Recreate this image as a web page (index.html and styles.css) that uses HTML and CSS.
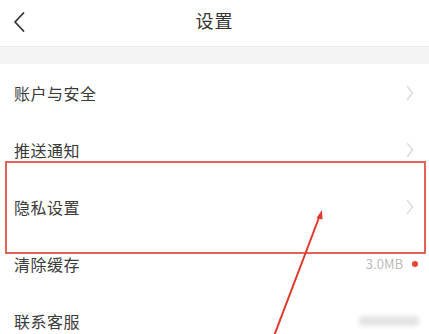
FILE: index.html
```html
<!DOCTYPE html>
<html lang="zh">
<head>
<meta charset="utf-8">
<link rel="stylesheet" href="styles.css">
</head>
<body>
<div class="page">
  <header class="topbar">
    <svg class="back" width="14" height="22" viewBox="0 0 14 22"><path d="M11.5 2 L3 11 L11.5 20" fill="none" stroke="#333" stroke-width="1.8" stroke-linecap="round" stroke-linejoin="round"/></svg>
    <div class="title">设置</div>
  </header>
  <div class="gap"></div>
  <ul class="list">
    <li class="row"><span class="label">账户与安全</span><svg class="chev" width="8" height="16" viewBox="0 0 8 16"><path d="M1.5 1.5 L6.5 8 L1.5 14.5" fill="none" stroke="#ddd" stroke-width="1.5" stroke-linecap="round" stroke-linejoin="round"/></svg></li>
    <li class="row"><span class="label">推送通知</span><svg class="chev" width="8" height="16" viewBox="0 0 8 16"><path d="M1.5 1.5 L6.5 8 L1.5 14.5" fill="none" stroke="#ddd" stroke-width="1.5" stroke-linecap="round" stroke-linejoin="round"/></svg></li>
    <li class="row"><span class="label">隐私设置</span><svg class="chev" width="8" height="16" viewBox="0 0 8 16"><path d="M1.5 1.5 L6.5 8 L1.5 14.5" fill="none" stroke="#ddd" stroke-width="1.5" stroke-linecap="round" stroke-linejoin="round"/></svg></li>
    <li class="row"><span class="label">清除缓存</span><span class="meta">3.0MB<i class="dot"></i></span></li>
    <li class="row"><span class="label">联系客服</span><span class="mark"></span></li>
  </ul>
  <div class="highlight"></div>
  <svg class="pointer" width="429" height="334" viewBox="0 0 429 334">
    <line x1="274" y1="336" x2="320" y2="215" stroke="#e0392b" stroke-width="2"/>
    <path d="M322 210 L316.5 218 L322.5 219.5 Z" fill="#e0392b"/>
  </svg>
</div>
</body>
</html>
```
FILE: styles.css
```css
* { box-sizing: border-box; }
html, body { margin: 0; padding: 0; }
body {
  background: #fff;
  font-family: "Noto Sans CJK SC", "Noto Sans", sans-serif;
  color: #333;
  width: 429px;
  height: 334px;
  overflow: hidden;
}
.page { position: relative; width: 429px; height: 334px; overflow: hidden; }
.topbar {
  height: 47px;
  display: flex;
  align-items: center;
  justify-content: center;
  position: relative;
  border-bottom: 1px solid #eee;
}
.back { position: absolute; left: 12px; top: 11px; }
.title { font-size: 18px; color: #333; letter-spacing: 1px; margin-top: -6px; }
.gap { height: 17px; background: #f4f4f4; }
.list { list-style: none; margin: 0; padding: 0; }
.row {
  height: 57px;
  display: flex;
  align-items: center;
  justify-content: space-between;
  padding: 0 14px 0 14px;
}
.label { font-size: 16px; color: #3a3a3a; letter-spacing: 0.5px; }
.chev { margin-right: 1px; }
.meta { font-size: 13px; color: #bbb; display: flex; align-items: center; gap: 9px; margin-right: -3px; }
.dot { width: 6px; height: 6px; border-radius: 50%; background: #e8452f; display: inline-block; }
.mark {
  width: 60px; height: 10px; border-radius: 4px;
  background: #e4e4e4; filter: blur(2px); margin-right: -4px;
}
.highlight {
  position: absolute;
  left: 5px; top: 161px;
  width: 421px; height: 93px;
  border: 2px solid #e2625a;
}
.pointer { position: absolute; left: 0; top: 0; }
```
